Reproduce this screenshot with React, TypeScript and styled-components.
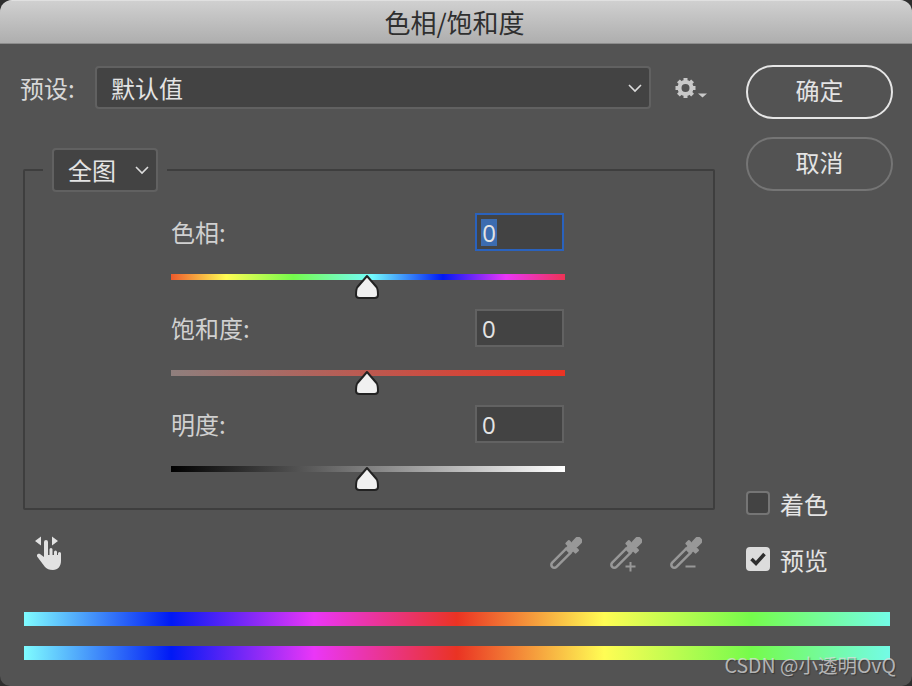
import React from "react";
import styled, { createGlobalStyle } from "styled-components";

const HUE_BAR =
  "linear-gradient(90deg, #7ffcff 0%, #0019f5 17%, #ea36f7 33.5%, #ea3323 50%, #fffd54 67%, #75fb4c 84%, #73fbe6 100%)";
const HUE_TRACK =
  "linear-gradient(90deg, #ee5a2c 0%, #fffd54 14%, #75fb4c 31%, #73fbfd 51%, #0019f5 69%, #ea36f7 85%, #ee3355 100%)";
const SATURATION_TRACK = "linear-gradient(90deg, #8f7f7d 0%, #ea3323 100%)";
const LIGHTNESS_TRACK = "linear-gradient(90deg, #000 0%, #fff 100%)";

const sliders = [
  { label: "色相:", track: HUE_TRACK, focused: true },
  { label: "饱和度:", track: SATURATION_TRACK, focused: false },
  { label: "明度:", track: LIGHTNESS_TRACK, focused: false },
];

const GearIcon = () => (
  <svg width="32" height="24" viewBox="0 0 32 24">
    <g fill="#c9c9c9">
      {[0, 45, 90, 135, 180, 225, 270, 315].map((angle) => (
        <rect key={angle} x="8.5" y="1" width="4" height="5" transform={`rotate(${angle} 10.5 11)`} />
      ))}
      <path d="M23 16.500h9l-4.500 4z" />
    </g>
    <circle cx="10.5" cy="11" r="6" fill="none" stroke="#c9c9c9" strokeWidth="4" />
  </svg>
);

const HandIcon = () => (
  <svg width="30" height="38" viewBox="0 0 30 38">
    <g fill="#e2e2e2">
      <path d="M1 7l6-4.500v9zM18 2.500l6 4.500-6 4.500z" />
      <path d="M10 8a2 2 0 0 1 4 0V21h1.500V15.500a1.500 1.500 0 0 1 3 0V21h1.500V18a1.500 1.500 0 0 1 3 0V21h1V19.500a1.500 1.500 0 0 1 3 0V27c0 5-3 9-8 9-4 0-6-1-8-3L3.500 23c-1.500-2 .5-4 2.500-3L10 23z" />
    </g>
  </svg>
);

type DropperProps = { mark?: "plus" | "minus" };

const DropperIcon: React.FC<DropperProps> = ({ mark }) => (
  <svg width="32" height="40" viewBox="0 0 32 40">
    <g transform="rotate(45 16 16)" fill="#989898">
      <rect x="12" y="-5" width="8" height="11" rx="3.5" />
      <rect x="8.500" y="4.500" width="15" height="5.500" rx="1" />
      <rect x="12" y="9" width="8" height="5" />
      <path d="M13 12V32.500a3 3 0 0 0 6 0V12" fill="none" stroke="#989898" strokeWidth="2.500" />
    </g>
    {mark && (
      <g stroke="#989898" strokeWidth="2">
        <path d="M15.500 29.500h10" />
        {mark === "plus" && <path d="M20.500 25v9.500" />}
      </g>
    )}
  </svg>
);

const Thumb = () => (
  <svg width="26" height="26" viewBox="0 0 26 26">
    <path
      d="M13 2L22.500 13C24 15 24 18 24 21c0 2-1 3-3.500 3h-15C3 24 2 23 2 21c0-3 0-6 1.500-8z"
      fill="#f0f0f0"
      stroke="#222"
      strokeWidth="2"
      strokeLinejoin="round"
    />
  </svg>
);

const Chevron = () => (
  <svg width="14" height="10" viewBox="0 0 14 10">
    <path d="M1 2L7 8L13 2" fill="none" stroke="#dcdcdc" strokeWidth="1.600" />
  </svg>
);

const CheckMark = () => (
  <svg width="20" height="18" viewBox="0 0 20 18">
    <path d="M3.500 9l4.500 4.500 8.500-9.500" fill="none" stroke="#2e2e2e" strokeWidth="3.500" />
  </svg>
);

export default function App() {
  return (
    <>
      <GlobalStyle />
      <Window>
        <TitleBar>色相/饱和度</TitleBar>
        <Body>
          <Main>
            <LeftColumn>
              <PresetRow>
                <PresetLabel>预设:</PresetLabel>
                <PresetSelect>
                  <span>默认值</span>
                  <Chevron />
                </PresetSelect>
                <GearButton>
                  <GearIcon />
                </GearButton>
              </PresetRow>

              <Group>
                <ChannelLegend>
                  <ChannelSelect>
                    <span>全图</span>
                    <Chevron />
                  </ChannelSelect>
                </ChannelLegend>
                {sliders.map((slider) => (
                  <SliderBlock key={slider.label}>
                    <SliderHead>
                      <SliderLabel>{slider.label}</SliderLabel>
                      <ValueBox $focused={slider.focused}>
                        {slider.focused ? <Selected>0</Selected> : "0"}
                      </ValueBox>
                    </SliderHead>
                    <Track $fill={slider.track}>
                      <ThumbHolder>
                        <Thumb />
                      </ThumbHolder>
                    </Track>
                  </SliderBlock>
                ))}
              </Group>

              <ToolRow>
                <HandSlot>
                  <HandIcon />
                </HandSlot>
                <Droppers>
                  <DropperIcon />
                  <DropperIcon mark="plus" />
                  <DropperIcon mark="minus" />
                </Droppers>
              </ToolRow>
            </LeftColumn>

            <RightColumn>
              <Buttons>
                <PillButton $primary>确定</PillButton>
                <PillButton>取消</PillButton>
              </Buttons>
              <Checks>
                <CheckRow>
                  <CheckBox />
                  <span>着色</span>
                </CheckRow>
                <CheckRow>
                  <CheckBox $checked>
                    <CheckMark />
                  </CheckBox>
                  <span>预览</span>
                </CheckRow>
              </Checks>
            </RightColumn>
          </Main>

          <Bars>
            <HueBar />
            <HueBar />
          </Bars>
        </Body>
        <Watermark>CSDN @小透明OvQ</Watermark>
      </Window>
    </>
  );
}

const GlobalStyle = createGlobalStyle`
  html, body {
    margin: 0;
    padding: 0;
    background: #2e2e2e;
  }
`;

const Window = styled.div`
  position: relative;
  width: 912px;
  height: 686px;
  overflow: hidden;
  border-radius: 12px 12px 10px 10px;
  background: #535353;
  color: #e4e4e4;
  font-family: "Noto Sans CJK SC", "Liberation Sans", sans-serif;
  font-size: 24px;
`;

const TitleBar = styled.div`
  box-sizing: border-box;
  height: 44px;
  padding: 0 3px 1px 0;
  border-top: 1px solid #e0e0e0;
  border-bottom: 1px solid #8c8c8c;
  display: flex;
  align-items: center;
  justify-content: center;
  background: linear-gradient(180deg, #d0d0d0 0%, #aeaeae 100%);
  color: #2f2f2f;
  font-size: 26px;
`;

const Body = styled.div`
  padding: 21px 22px 0 20px;
`;

const Main = styled.div`
  display: flex;
  height: 510px;
`;

const LeftColumn = styled.div`
  width: 695px;
  flex: none;
  padding-top: 1px;
`;

const PresetRow = styled.div`
  display: flex;
  align-items: center;
  height: 43px;
`;

const PresetLabel = styled.span`
  width: 75px;
  color: #d8d8d8;
  flex: none;
`;

const PresetSelect = styled.div`
  box-sizing: border-box;
  width: 556px;
  height: 43px;
  display: flex;
  align-items: center;
  justify-content: space-between;
  padding: 0 7px 0 14px;
  background: #434343;
  border: 2px solid #616161;
  border-radius: 4px;
`;

const GearButton = styled.div`
  margin-left: 24px;
  margin-top: 2px;
  display: flex;
`;

const Group = styled.fieldset`
  box-sizing: border-box;
  margin: 39px 0 0 3px;
  padding: 22px 0 0;
  width: 692px;
  height: 362px;
  min-width: 0;
  border: 2px solid #3e3e3e;
  border-radius: 2px;
`;

const ChannelLegend = styled.legend`
  margin-left: 18px;
  padding: 0 9px;
  height: 44px;
`;

const ChannelSelect = styled.div`
  box-sizing: border-box;
  width: 106px;
  height: 44px;
  display: flex;
  align-items: center;
  justify-content: space-between;
  padding: 0 7px 1px 14px;
  background: #434343;
  border: 2px solid #616161;
  border-radius: 4px;
`;

const SliderBlock = styled.div`
  width: 394px;
  height: 96px;
  margin-left: 146px;
`;

const SliderHead = styled.div`
  display: flex;
  align-items: center;
  justify-content: space-between;
  height: 36px;
  padding-right: 1px;
  margin-bottom: 24px;
`;

const SliderLabel = styled.span`
  color: #d0d0d0;
  padding-bottom: 2px;
`;

const ValueBox = styled.div<{ $focused?: boolean }>`
  box-sizing: border-box;
  width: 89px;
  height: 38px;
  display: flex;
  align-items: center;
  padding-left: ${({ $focused }) => ($focused ? "4px" : "5px")};
  background: #434343;
  border: 2px solid ${({ $focused }) => ($focused ? "#2a62bd" : "#626262")};
  font-family: "Open Sans", "Liberation Sans", sans-serif;
`;

const Selected = styled.span`
  display: block;
  width: 16px;
  height: 27px;
  line-height: 27px;
  background: #3c6cb0;
  text-align: center;
`;

const Track = styled.div<{ $fill: string }>`
  position: relative;
  height: 6px;
  background: ${({ $fill }) => $fill};
`;

const ThumbHolder = styled.div`
  position: absolute;
  left: 183px;
  top: 0;
  display: flex;
`;

const ToolRow = styled.div`
  display: flex;
  align-items: flex-start;
  justify-content: space-between;
  margin-top: 25px;
  padding-right: 13px;
`;

const HandSlot = styled.div`
  margin-left: 14px;
  margin-top: -1px;
  display: flex;
`;

const Droppers = styled.div`
  display: flex;
  gap: 28px;
  margin-top: 2px;
`;

const RightColumn = styled.div`
  flex: 1;
  margin-left: 31px;
  display: flex;
  flex-direction: column;
  justify-content: space-between;
`;

const Buttons = styled.div`
  display: flex;
  flex-direction: column;
  gap: 18px;
`;

const PillButton = styled.div<{ $primary?: boolean }>`
  box-sizing: border-box;
  width: 147px;
  height: 54px;
  padding-bottom: 5px;
  display: flex;
  align-items: center;
  justify-content: center;
  border-radius: 27px;
  border: 2px solid ${({ $primary }) => ($primary ? "#e6e6e6" : "#757575")};
`;

const Checks = styled.div`
  display: flex;
  flex-direction: column;
  gap: 32px;
  margin-bottom: 4px;
`;

const CheckRow = styled.div`
  display: flex;
  align-items: center;
  gap: 10px;
  height: 24px;
`;

const CheckBox = styled.div<{ $checked?: boolean }>`
  box-sizing: border-box;
  width: 24px;
  height: 24px;
  display: flex;
  align-items: center;
  justify-content: center;
  border-radius: 4px;
  border: 2px solid ${({ $checked }) => ($checked ? "#dcdcdc" : "#757575")};
  background: ${({ $checked }) => ($checked ? "#dcdcdc" : "#434343")};
`;

const Bars = styled.div`
  display: flex;
  flex-direction: column;
  gap: 20px;
  margin-top: 37px;
  padding-left: 4px;
`;

const HueBar = styled.div`
  height: 14px;
  background: ${HUE_BAR};
`;

const Watermark = styled.div`
  position: absolute;
  right: 16px;
  bottom: 8px;
  color: rgba(225, 225, 225, 0.72);
  font-size: 19.5px;
  line-height: 26px;
  text-shadow: 1px 1px 1px rgba(0, 0, 0, 0.35);
`;
